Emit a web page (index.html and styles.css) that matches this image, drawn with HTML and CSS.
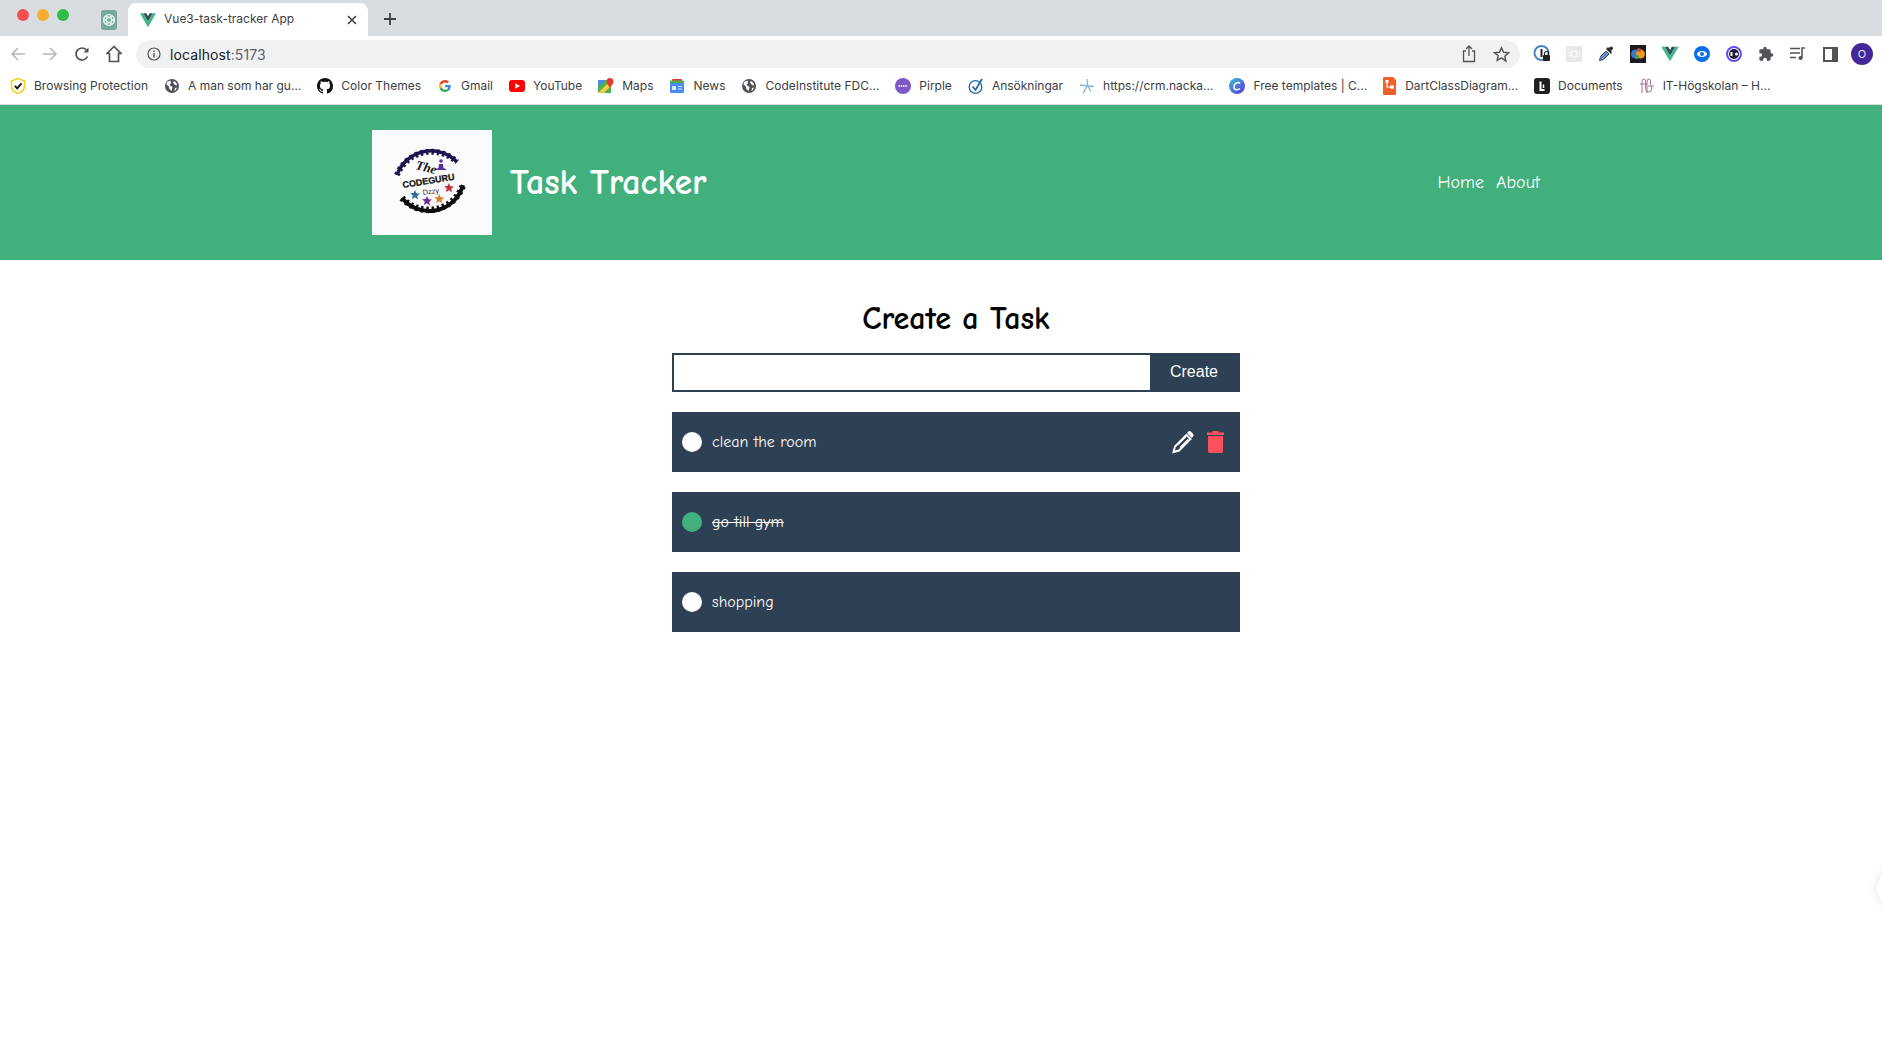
FILE: index.html
```html
<!DOCTYPE html>
<html lang="en">
<head>
<meta charset="utf-8">
<title>Vue3-task-tracker App</title>
<link rel="stylesheet" href="styles.css">
</head>
<body>
<div class="tabstrip">
  <div class="lights"><i class="light red"></i><i class="light yellow"></i><i class="light green"></i></div>
  <div class="pinned-tab"><svg width="16" height="20" viewBox="0 0 16 20"><rect width="16" height="20" rx="3" fill="#74aa9c"/><g fill="none" stroke="#e4efec" stroke-width="1.1"><circle cx="8" cy="10" r="5.5"/><ellipse cx="8" cy="10" rx="5.5" ry="2.4" transform="rotate(30 8 10)"/><ellipse cx="8" cy="10" rx="5.5" ry="2.4" transform="rotate(-30 8 10)"/><ellipse cx="8" cy="10" rx="5.5" ry="2.4" transform="rotate(90 8 10)"/></g></svg></div>
  <div class="tab">
    <svg width="16" height="16" viewBox="0 0 24 24"><path d="M0 2h5l7 12L19 2h5L12 23z" fill="#41b883"/><path d="M5 2h4.500l2.500 4.500L14.500 2H19l-7 12z" fill="#34495e"/></svg>
    <span class="tab-title">Vue3-task-tracker App</span>
    <svg class="tab-close" width="10" height="10" viewBox="0 0 10 10"><path d="M1 1l8 8M9 1L1 9" stroke="#3c4043" stroke-width="1.500"/></svg>
  </div>
  <svg class="new-tab" width="14" height="14" viewBox="0 0 14 14"><path d="M7 1v12M1 7h12" stroke="#3c4043" stroke-width="1.800"/></svg>
</div>

<div class="toolbar">
  <div class="nav-buttons">
    <span class="tool"><svg width="16" height="16" viewBox="0 0 16 16"><path d="M15 8H2M8 2L2 8l6 6" fill="none" stroke="#b4b6b9" stroke-width="1.600"/></svg></span>
    <span class="tool"><svg width="16" height="16" viewBox="0 0 16 16"><path d="M1 8h13M8 2l6 6-6 6" fill="none" stroke="#b4b6b9" stroke-width="1.600"/></svg></span>
    <span class="tool"><svg width="16" height="16" viewBox="0 0 16 16"><path d="M13.500 10.500A6 6 0 1 1 12.500 4" fill="none" stroke="#505357" stroke-width="1.700"/><path d="M14.500 1.500v5h-5z" fill="#505357"/></svg></span>
    <span class="tool"><svg width="16" height="18" viewBox="0 0 16 18"><path d="M8 1.500L1 8.500h2.500v8h9v-8H15z" fill="none" stroke="#505357" stroke-width="1.700"/></svg></span>
  </div>
  <div class="omnibox">
    <svg width="14" height="14" viewBox="0 0 14 14"><circle cx="7" cy="7" r="6" fill="none" stroke="#505357" stroke-width="1.200"/><path d="M7 6v4.500M7 3.500v1.500" stroke="#505357" stroke-width="1.400"/></svg>
    <span class="url">localhost<span class="url-port">:5173</span></span>
    <span class="omni-actions">
      <svg width="14" height="18" viewBox="0 0 14 18"><path d="M4 6H1.500v10.500h11V6H10M7 11V1.500M4 4l3-3 3 3" fill="none" stroke="#505357" stroke-width="1.300"/></svg>
      <svg width="17" height="17" viewBox="0 0 24 24"><path d="M12 2.500l2.900 6.400 7 .8-5.200 4.700 1.400 6.900L12 16.800l-6.100 3.500 1.400-6.900L2.100 9.700l7-.8z" fill="none" stroke="#505357" stroke-width="2"/></svg>
    </span>
  </div>
  <div class="extensions">
    <span class="tool"><svg width="18" height="20" viewBox="0 0 18 20"><circle cx="8.500" cy="9" r="7" fill="#fff" stroke="#4b86c4" stroke-width="2"/><rect x="7.500" y="5" width="2" height="8" fill="#222"/><rect x="10" y="11" width="7" height="6" rx="1" fill="#222"/><path d="M11.500 11V9.500a2 2 0 0 1 4 0V11" fill="none" stroke="#222" stroke-width="1.200"/></svg></span>
    <span class="tool"><svg width="16" height="16" viewBox="0 0 16 16"><rect width="16" height="16" fill="#e8e8e8"/><circle cx="8" cy="8" r="3" fill="none" stroke="#f8f8f8" stroke-width="1.500"/><ellipse cx="8" cy="8" rx="6.500" ry="2.500" fill="none" stroke="#f8f8f8"/></svg></span>
    <span class="tool"><svg width="16" height="16" viewBox="0 0 16 16"><path d="M1.500 14.500l1-4L8 5l3 3-5.500 5.500z" fill="#6a8fc0" stroke="#3c4a60"/><path d="M8 3l5 5 1-2-1-1 1.500-1.500a1.500 1.500 0 0 0-2.500-2.500L11 2 10 1z" fill="#333"/></svg></span>
    <span class="tool"><svg width="16" height="18" viewBox="0 0 16 18"><rect width="16" height="18" fill="#1b1b24"/><circle cx="5.500" cy="9" r="4.500" fill="#3a78c9"/><circle cx="10.500" cy="9" r="4.500" fill="#e89a1f"/><circle cx="9" cy="5" r="2" fill="#d9472f"/><circle cx="7" cy="12" r="2" fill="#4a9d4e"/></svg></span>
    <span class="tool"><svg width="18" height="16" viewBox="0 0 24 22"><path d="M0 1h5l7 12L19 1h5L12 21z" fill="#41b883"/><path d="M5 1h4.500L12 5.500 14.500 1H19l-7 12z" fill="#34495e"/></svg></span>
    <span class="tool"><svg width="16" height="16" viewBox="0 0 16 16"><circle cx="8" cy="8" r="8" fill="#0b6fe8"/><ellipse cx="8" cy="8" rx="5" ry="3" fill="#fff"/><circle cx="8" cy="8" r="2" fill="#0b6fe8"/></svg></span>
    <span class="tool"><svg width="16" height="16" viewBox="0 0 16 16"><circle cx="8" cy="8" r="7" fill="#fff" stroke="#6a4cf0" stroke-width="2"/><circle cx="8" cy="8" r="5" fill="#1d1d3a"/><rect x="4.500" y="6" width="2" height="4" fill="#fff"/><circle cx="10.500" cy="8" r="1.500" fill="#fff"/></svg></span>
    <span class="tool"><svg width="16" height="16" viewBox="0 0 24 24"><path d="M20.500 11H19V7a2 2 0 0 0-2-2h-4V3.500a2.500 2.500 0 0 0-5 0V5H4a2 2 0 0 0-2 2v3.800h1.500a2.700 2.700 0 0 1 0 5.400H2V20a2 2 0 0 0 2 2h3.800v-1.500a2.700 2.700 0 0 1 5.400 0V22H17a2 2 0 0 0 2-2v-4h1.500a2.500 2.500 0 0 0 0-5z" fill="#505357"/></svg></span>
    <span class="tool"><svg width="16" height="14" viewBox="0 0 16 14"><path d="M0 1.500h10M0 6h10M0 10.500h6" stroke="#505357" stroke-width="1.500"/><path d="M12 11V1h3" fill="none" stroke="#505357" stroke-width="1.500"/><circle cx="10.500" cy="11" r="2" fill="#505357"/></svg></span>
    <span class="tool"><svg width="15" height="15" viewBox="0 0 15 15"><rect x="1" y="1" width="13" height="13" fill="none" stroke="#505357" stroke-width="2"/><rect x="9" y="1" width="5" height="13" fill="#505357"/></svg></span>
    <span class="tool"><span class="avatar">O</span></span>
  </div>
</div>

<nav class="bookmarks">
  <a class="bookmark"><svg width="16" height="16" viewBox="0 0 16 16"><path d="M8 .5l6.500 2.500v5c0 3.800-3 6.300-6.500 7.500C4.500 14.300 1.500 11.800 1.500 8V3z" fill="#fff" stroke="#f7d21a" stroke-width="1.600"/><path d="M4.800 7.800l2.400 2.600 4.300-5" fill="none" stroke="#111" stroke-width="1.800"/></svg>Browsing Protection</a>
  <a class="bookmark"><svg width="16" height="16" viewBox="0 0 16 16"><use href="#globe"/></svg>A man som har gu...</a>
  <a class="bookmark"><svg width="16" height="16" viewBox="0 0 16 16"><path fill="#111" d="M8 0C3.580 0 0 3.580 0 8c0 3.540 2.290 6.530 5.470 7.590.4.070.55-.17.55-.38 0-.19-.01-.82-.01-1.490-2.010.37-2.530-.49-2.690-.94-.09-.23-.48-.94-.82-1.130-.28-.15-.68-.52-.01-.53.63-.01 1.080.58 1.230.82.720 1.210 1.870.87 2.330.66.070-.52.28-.87.51-1.070-1.780-.2-3.640-.89-3.640-3.950 0-.87.31-1.590.82-2.150-.08-.2-.36-1.020.08-2.120 0 0 .67-.21 2.200.82.64-.18 1.320-.27 2-.27.68 0 1.360.09 2 .27 1.530-1.040 2.200-.82 2.200-.82.44 1.100.16 1.920.08 2.120.51.56.82 1.270.82 2.150 0 3.070-1.870 3.750-3.650 3.950.29.25.54.73.54 1.480 0 1.070-.01 1.930-.01 2.200 0 .21.15.46.55.38A8.013 8.013 0 0 0 16 8c0-4.420-3.580-8-8-8z"/></svg>Color Themes</a>
  <a class="bookmark"><svg class="icon-small" width="12" height="12" viewBox="0 0 48 48"><path fill="#EA4335" d="M24 9.500c3.500 0 6.700 1.200 9.200 3.600l6.900-6.900C35.900 2.400 30.500 0 24 0 14.600 0 6.500 5.400 2.600 13.200l8 6.200C12.400 13.700 17.700 9.500 24 9.500z"/><path fill="#4285F4" d="M47 24.500c0-1.600-.1-3.100-.4-4.500H24v9h12.900c-.6 3-2.200 5.500-4.700 7.200l7.700 6c4.500-4.200 7.100-10.300 7.100-17.700z"/><path fill="#FBBC05" d="M10.500 28.600c-.5-1.500-.8-3-.8-4.600s.3-3.100.8-4.600l-8-6.200C.9 16.500 0 20.100 0 24s.9 7.500 2.600 10.800z"/><path fill="#34A853" d="M24 48c6.500 0 11.900-2.100 15.900-5.800l-7.700-6c-2.200 1.500-5 2.300-8.200 2.300-6.300 0-11.600-4.200-13.500-9.900l-8 6.200C6.500 42.600 14.600 48 24 48z"/></svg>Gmail</a>
  <a class="bookmark"><svg width="16" height="16" viewBox="0 0 16 16"><rect y="2" width="16" height="12" rx="3" fill="#f00"/><path d="M6.300 5.200L11 8l-4.700 2.800z" fill="#fff"/></svg>YouTube</a>
  <a class="bookmark"><svg width="16" height="16" viewBox="0 0 16 16"><rect y="2" width="13" height="13" fill="#4caf50"/><path d="M0 15L13 2v6L6 15z" fill="#f6c945"/><path d="M0 2h7L0 9z" fill="#4a8af4"/><path d="M12 0a3.500 3.500 0 0 1 3.500 3.500C15.500 6 12 9.500 12 9.500S8.500 6 8.500 3.500A3.500 3.500 0 0 1 12 0z" fill="#e53935"/></svg>Maps</a>
  <a class="bookmark"><svg width="16" height="16" viewBox="0 0 16 16"><rect x="3" y="1" width="10" height="6" rx="1" fill="#e53935"/><rect x="1" y="2.500" width="14" height="4" rx="1" fill="#4caf50"/><rect x="1" y="5" width="14" height="10" rx="1" fill="#4a8af4"/><rect x="3" y="8" width="4" height="4" fill="#dbe8fd"/><path d="M9 8.500h4M9 11h4" stroke="#dbe8fd" stroke-width="1.200"/></svg>News</a>
  <a class="bookmark"><svg width="16" height="16" viewBox="0 0 16 16"><use href="#globe"/></svg>CodeInstitute FDC...</a>
  <a class="bookmark"><svg width="16" height="16" viewBox="0 0 16 16"><circle cx="8" cy="8" r="8" fill="#7e57c9"/><path d="M3.500 8h9" stroke="#fff" stroke-width="1.300" stroke-dasharray="1.600 .6"/></svg>Pirple</a>
  <a class="bookmark"><svg width="16" height="16" viewBox="0 0 16 16"><circle cx="7.500" cy="9" r="6.300" fill="#fff" stroke="#236ea5" stroke-width="1.300"/><path d="M4.500 8.500l3 3.500L14 1" fill="none" stroke="#236ea5" stroke-width="1.800"/></svg>Ansökningar</a>
  <a class="bookmark"><svg width="16" height="16" viewBox="0 0 16 16"><path d="M1 7l14 1.500M8 1l.5 6.500L4 15M8.500 7.500l3.500 6" fill="none" stroke="#7fb8cf" stroke-width="1.300"/></svg>https://crm.nacka...</a>
  <a class="bookmark"><svg width="16" height="16" viewBox="0 0 16 16"><defs><linearGradient id="canva" x1="0" y1="0" x2="1" y2="1"><stop offset="0" stop-color="#28c5d6"/><stop offset="1" stop-color="#6a2ce0"/></linearGradient></defs><circle cx="8" cy="8" r="8" fill="url(#canva)"/><path d="M11 5.500C9.500 3.500 5 5 5 9c0 3.200 3.500 3.500 6 1.500" fill="none" stroke="#fff" stroke-width="1.500"/></svg>Free templates | C...</a>
  <a class="bookmark"><svg width="14" height="18" viewBox="0 0 14 18"><path d="M1 0h9l3 3v14a1 1 0 0 1-1 1H1a1 1 0 0 1-1-1V1a1 1 0 0 1 1-1z" fill="#f4602a"/><path d="M4 4v6h4" fill="none" stroke="#fff" stroke-width="1.200"/><rect x="2.500" y="3" width="3" height="3" fill="#fff"/><circle cx="9" cy="10" r="2" fill="#fff"/></svg>DartClassDiagram...</a>
  <a class="bookmark"><svg width="16" height="16" viewBox="0 0 16 16"><rect width="16" height="16" rx="3" fill="#1f2024"/><path d="M6.500 3.500V12h4" fill="none" stroke="#fff" stroke-width="2"/><path d="M9.500 6.500V10" stroke="#fff" stroke-width="1.500"/></svg>Documents</a>
  <a class="bookmark"><svg width="16" height="18" viewBox="0 0 16 18"><g fill="none" stroke="#a5708e" stroke-width="1"><path d="M3 16V4a1.800 1.800 0 0 1 3.600 0v8a3 3 0 0 0 6 0V9"/><path d="M1 7h7M8 16V4a1.800 1.800 0 0 1 3.600 0v4"/><path d="M9 9h6"/></g></svg>IT-Högskolan – H...</a>
</nav>

<svg class="defs" width="0" height="0"><defs><g id="globe"><circle cx="8" cy="8" r="7" fill="#505357"/><path d="M3 4l3.500-1.500.5 2.500-1.500 2 3 2-1 4-2-2-1-3-2-1.500zM10 3l2.500 2 .5 2.500-2-.5-2-2.500zM11 10l2-.5-1.500 3-1 .5z" fill="#fff"/></g><path id="star" d="M0-5l1.400 3.300 3.500.3-2.700 2.300.9 3.500L0 2.200-3.100 4.100l.9-3.500-2.700-2.300 3.500-.3z"/></defs></svg>

<header class="site-header">
  <div class="brand">
    <svg class="logo" width="120" height="105" viewBox="0 0 120 105">
      <rect width="120" height="105" fill="#fbfbfb"/>
      <path d="M25 45A36 36 0 0 1 85 32" fill="none" stroke="#1d1450" stroke-width="3.500"/>
      <path d="M25 45A37 37 0 0 1 85 32" fill="none" stroke="#1d1450" stroke-width="6" stroke-dasharray="2.500 3"/>
      <path d="M30 68A35 35 0 0 0 91 55" fill="none" stroke="#0d0d0d" stroke-width="4"/>
      <path d="M30 68A36 36 0 0 0 91 55" fill="none" stroke="#0d0d0d" stroke-width="6.500" stroke-dasharray="2.500 3"/>
      <text class="logo-the" x="43" y="39" transform="rotate(14 43 39)">The</text>
      <circle cx="69" cy="31" r="1.800" fill="#5a2ca0"/><path d="M63.500 40c.5-1 1.500-1.500 3-2l.5-4h4l.5 4c1.500.5 2.500 1 3 2z" fill="#5a2ca0"/>
      <text class="logo-code" x="31" y="58" transform="rotate(-9 31 58)">CODEGURU</text>
      <text class="logo-dzzy" x="51" y="65" transform="rotate(-8 51 65)">Dzzy</text>
      <use href="#star" x="43" y="65" fill="#2a6f97"/>
      <use href="#star" x="55" y="71" fill="#6a2c91"/>
      <use href="#star" x="67.300" y="69" fill="#d9822b"/>
      <use href="#star" x="77" y="58" fill="#c0303a"/>
    </svg>
    <h1 class="brand-title">Task Tracker</h1>
  </div>
  <nav class="site-nav"><a>Home</a><a>About</a></nav>
</header>

<main class="content">
  <h2 class="page-title">Create a Task</h2>
  <form class="task-form">
    <input class="task-input" type="text" aria-label="Task">
    <button class="task-submit" type="button">Create</button>
  </form>
  <ul class="task-list">
    <li class="task">
      <span class="check"></span>
      <span class="task-text">clean the room</span>
      <span class="task-actions">
        <svg width="24" height="24" viewBox="0 0 24 24"><path d="M15.500 5l4 4L8 20.500l-5.500 1.500L4 16.500z" fill="none" stroke="#fff" stroke-width="2"/><path d="M6.500 15l8-8M9 17.500l8-8" stroke="#fff" stroke-width="1.200"/><path d="M16 3l1.200-1.200a2 2 0 0 1 2.800 0l2 2a2 2 0 0 1 0 2.800L20.800 8z" fill="#fff"/></svg>
        <svg width="17" height="22" viewBox="0 0 17 22"><path d="M5.500 1.500V0h6v1.500H17V4H0V1.500z" fill="#f9515b"/><path d="M1 5h15v15a2 2 0 0 1-2 2H3a2 2 0 0 1-2-2z" fill="#f9515b"/></svg>
      </span>
    </li>
    <li class="task">
      <span class="check done"></span>
      <span class="task-text struck">go till gym</span>
    </li>
    <li class="task">
      <span class="check"></span>
      <span class="task-text">shopping</span>
    </li>
  </ul>
</main>
<div class="float-bubble"></div>
</body>
</html>
```
FILE: styles.css
```css
* { box-sizing: border-box; }
html, body { margin: 0; height: 100%; }
body {
  position: relative;
  overflow: hidden;
  background: #fff;
  font-family: "Liberation Sans", Arial, sans-serif;
  color: #000;
}
.defs { position: absolute; }

.tabstrip { height: 36px; background: #d9dce1; display: flex; align-items: flex-end; }
.lights { display: flex; gap: 8px; padding: 0 0 15px 17px; width: 101px; align-self: flex-end; }
.light { width: 12px; height: 12px; border-radius: 50%; }
.red { background: #f5504e; }
.yellow { background: #f8ad2f; }
.green { background: #30bc46; }
.pinned-tab { width: 27px; height: 26px; display: flex; align-items: flex-start; }
.tab {
  width: 240px; height: 33px; background: #fff; border-radius: 8px 8px 0 0;
  display: flex; align-items: center; padding: 0 11px 0 12px; gap: 8px;
}
.tab-title { flex: 1; font: 12px Inter, sans-serif; color: #3c4043; padding-bottom: 2px; }
.new-tab { margin: 0 0 10px 15px; }

.toolbar { height: 32px; background: #fff; display: flex; align-items: center; padding: 4px 4px 0 2px; }
.nav-buttons, .extensions { display: flex; }
.tool { width: 32px; display: flex; justify-content: center; align-items: center; height: 28px; }
.omnibox {
  flex: 1; height: 28px; margin: 0 6px; background: #f0f1f3; border-radius: 14px;
  display: flex; align-items: center; padding: 0 10px 0 11px; gap: 9px;
}
.url { font: 14px Inter, sans-serif; letter-spacing: .1px; color: #202124; }
.url-port { color: #5f6368; }
.omni-actions { margin-left: auto; display: flex; align-items: center; gap: 17px; }
.avatar {
  width: 22px; height: 22px; border-radius: 50%; background: #44289a; color: #e8e4f5;
  font: 11px/22px Inter, sans-serif; text-align: center;
}

.bookmarks {
  height: 37px; background: #fff; border-bottom: 1px solid #dadce0;
  display: flex; align-items: center; padding-left: 10px; gap: 16px;
}
.bookmark { display: flex; align-items: center; gap: 8px; font: 12px Inter, sans-serif; color: #3c4043; white-space: nowrap; padding-bottom: 1px; }
.icon-small { margin: 0 2px; }

.site-header {
  height: 155px; background: #41b07c; display: flex; align-items: center;
  justify-content: space-between; padding: 0 342px 0 372px;
}
.brand { display: flex; align-items: center; gap: 18px; }
.logo { display: block; }
.logo-the { font: italic 700 13px "Liberation Serif", serif; fill: #111; }
.logo-code { font: 700 9px "Liberation Sans", sans-serif; fill: #111; stroke: #111; stroke-width: .25px; }
.logo-dzzy { font: 7px "DejaVu Sans", sans-serif; fill: #333; }
.brand-title { margin: 0; font: 700 36px "Comic Sans MS", "Comic Neue", cursive; color: #fff; }
.site-nav { display: flex; gap: 12px; }
.site-nav a { font: 18px "Comic Sans MS", "Comic Neue", cursive; color: #fff; }

.content { width: 568px; margin: 0 0 0 672px; }
.page-title { margin: 41px 0 16px; text-align: center; font: 700 32px/36px "Comic Sans MS", "Comic Neue", cursive; }
.task-form { display: flex; height: 39px; }
.task-input { width: 480px; height: 39px; border: 2px solid #2e4053; background: #fff; outline: 0; padding: 0; }
.task-submit {
  flex: 1; border: 0; background: #2e4053; color: #fff; font: 16px "Liberation Sans", Arial, sans-serif; padding: 0 4px 2px 0;
}
.task-list { list-style: none; margin: 20px 0 0; padding: 0; display: flex; flex-direction: column; gap: 20px; }
.task { height: 60px; background: #2e4053; display: flex; align-items: center; padding: 0 16px 0 10px; color: #fff; }
.check { width: 20px; height: 20px; border-radius: 50%; background: #fff; margin-right: 10px; }
.check.done { background: #41b07c; }
.task-text { font: 16px "Comic Sans MS", "Comic Neue", cursive; }
.struck { text-decoration: line-through; }
.task-actions { margin-left: auto; display: flex; align-items: center; gap: 12px; }

.float-bubble {
  position: absolute; left: 1877px; top: 870px; width: 36px; height: 36px; border-radius: 50%;
  background: #fff; box-shadow: 0 0 10px rgba(90, 110, 150, .2);
}
```
